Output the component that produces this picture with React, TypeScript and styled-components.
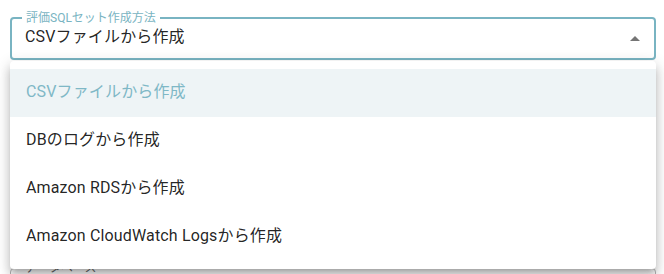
import styled, { createGlobalStyle } from 'styled-components'

// Global

const GlobalStyle = createGlobalStyle`
  html, body {
    margin: 0;
    padding: 0;
    background: #fff;
    font-family: Roboto, "Noto Sans CJK JP", "Noto Sans", sans-serif;
  }
`

// Types

interface IStyledItem {
  selected: boolean
}

interface IStyledField {
  focused: boolean
}

// Styles

const Page = styled.div`
  position: relative;
  display: flex;
  flex-direction: column;
  gap: 208px;
  padding: 17px 8px 0 10px;
  height: 274px;
  box-sizing: border-box;
  overflow: hidden;
`

const Field = styled.div<IStyledField>`
  position: relative;
  display: flex;
  align-items: center;
  height: 43px;
  padding: 0 7px 0 13px;
  border: ${p => (p.focused ? '2px solid #79b4c2' : '1px solid #b5b5b5')};
  border-radius: 4px;
  box-sizing: border-box;
  flex-shrink: 0;
`

const Label = styled.span<IStyledField>`
  position: absolute;
  top: -9px;
  left: 10px;
  padding: 0 4px;
  background: #fff;
  font-size: 12px;
  line-height: 16px;
  color: ${p => (p.focused ? '#79b4c2' : 'rgba(0,0,0,0.6)')};
`

const Value = styled.span`
  flex: 1;
  font-size: 16px;
  line-height: 20px;
  letter-spacing: 0.15px;
  color: rgba(0, 0, 0, 0.87);
  margin-top: -3px;
`

const Arrow = styled.svg`
  width: 24px;
  height: 24px;
  fill: rgba(0, 0, 0, 0.54);
`

const Menu = styled.ul`
  position: absolute;
  top: 61px;
  left: 10px;
  width: 646px;
  margin: 0;
  padding: 8px 0;
  list-style: none;
  background: #fff;
  border-radius: 4px;
  box-shadow: 0px 5px 5px -3px rgba(0, 0, 0, 0.2), 0px 8px 10px 1px rgba(0, 0, 0, 0.14),
    0px 3px 14px 2px rgba(0, 0, 0, 0.12);
  z-index: 10;
`

const Item = styled.li<IStyledItem>`
  display: flex;
  align-items: center;
  height: 48px;
  padding: 0 16px 3px;
  box-sizing: border-box;
  font-size: 16px;
  line-height: 20px;
  letter-spacing: 0.15px;
  color: ${p => (p.selected ? '#7fb8c6' : 'rgba(0,0,0,0.87)')};
  background: ${p => (p.selected ? '#eef4f6' : 'transparent')};
`

// Data

const options = [
  'CSVファイルから作成',
  'DBのログから作成',
  'Amazon RDSから作成',
  'Amazon CloudWatch Logsから作成',
]

// Component

export default function App() {
  return (
    <>
      <GlobalStyle />
      <Page>
        <Field focused>
          <Label focused>評価SQLセット作成方法</Label>
          <Value>{options[0]}</Value>
          <Arrow viewBox="0 0 24 24">
            <path d="M7 14l5-5 5 5z" />
          </Arrow>
        </Field>
        <Field focused={false}>
          <Label focused={false}>データベース</Label>
        </Field>
        <Menu>
          {options.map((o, i) => (
            <Item key={o} selected={i === 0}>
              {o}
            </Item>
          ))}
        </Menu>
      </Page>
    </>
  )
}
